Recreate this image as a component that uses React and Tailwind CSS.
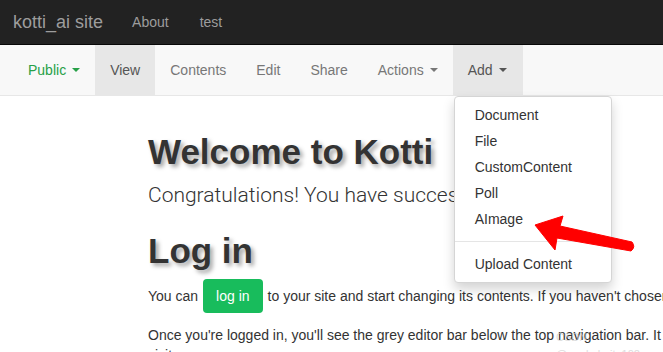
const Caret = () => (
  <span className="ml-[6px] inline-block h-0 w-0 border-x-4 border-t-4 border-x-transparent border-t-current align-middle" />
);

const tabs = [
  { label: "View", active: true },
  { label: "Contents" },
  { label: "Edit" },
  { label: "Share" },
  { label: "Actions", caret: true },
];

const addItems = ["Document", "File", "CustomContent", "Poll", "AImage"];

export default function App() {
  return (
    <div className="relative h-[352px] w-[663px] overflow-hidden bg-white font-['Liberation_Sans',Arial,sans-serif] text-[14px] text-[#333]">
      {/* top navbar */}
      <div className="flex h-[45px] items-center border-b border-[#080808] bg-[#222] text-[#9d9d9d]">
        <span className="pl-[13px] text-[18px]">kotti_ai site</span>
        <span className="pl-[29px]">About</span>
        <span className="pl-[31px]">test</span>
      </div>

      {/* editor bar */}
      <div className="flex h-[51px] border-b border-[#e7e7e7] bg-[#f8f8f8] pl-[13px] text-[#777]">
        <div className="flex items-center px-[15px] text-[#27a047]">
          Public
          <Caret />
        </div>
        {tabs.map((t) => (
          <div
            key={t.label}
            className={`flex items-center px-[15px] ${t.active ? "bg-[#e7e7e7] text-[#555]" : ""}`}
          >
            {t.label}
            {t.caret && <Caret />}
          </div>
        ))}
        <div className="relative flex items-center bg-[#e7e7e7] pl-[15px] pr-[16px] text-[#555]">
          Add
          <Caret />
          {/* dropdown */}
          <div className="absolute left-[1px] top-[51px] z-10 w-[158px] rounded-[4px] border border-[#d5d5d5] bg-white py-[5px] text-[#333] shadow-[0_6px_12px_rgba(0,0,0,0.175)]">
            {addItems.map((i) => (
              <div key={i} className="px-[20px] leading-[26px]">
                {i}
              </div>
            ))}
            <div className="my-[9px] h-px bg-[#e5e5e5]" />
            <div className="px-[20px] leading-[26px]">Upload Content</div>
          </div>
        </div>
      </div>

      {/* content */}
      <div className="pl-[148px] pt-[37px]">
        <h1 className="text-[35px] font-bold leading-[1.1] [text-shadow:3px_3px_4px_rgba(0,0,0,0.35)]">
          Welcome to Kotti
        </h1>
        <p className="mt-[9px] w-[440px] overflow-hidden whitespace-nowrap font-['Roboto',sans-serif] text-[21px] font-light leading-[1.4]">
          Congratulations! You have successfully installed Kotti.
        </p>
        <h2 className="mt-[22px] text-[35px] font-bold leading-[1.1] [text-shadow:3px_3px_4px_rgba(0,0,0,0.35)]">
          Log in
        </h2>
        <p className="mt-[9px] flex items-center whitespace-nowrap">
          You can
          <span className="mx-[5px] inline-block rounded-[4px] bg-[#18bc5c] px-[13px] py-[7px] leading-[20px] text-white">
            log in
          </span>
          to your site and start changing its contents. If you haven't chosen a password yet
        </p>
        <p className="mt-[12px] w-[915px] leading-[20px]">
          Once you're logged in, you'll see the grey editor bar below the top navigation bar. It will allow you to switch between editing and viewing as your
          visitors.
        </p>
      </div>

      {/* red arrow */}
      <svg className="pointer-events-none absolute left-0 top-0 z-20" width="663" height="352">
        <path
          d="M535 225 L563 216 L560 226 L632 242 Q636 247 631 251 L557 238 L555 250 Z"
          fill="#f00"
          stroke="#f00"
          strokeWidth="1"
          strokeLinejoin="round"
        />
      </svg>

      <span className="pointer-events-none absolute left-[556px] top-[329px] z-20 text-[11px] text-[#cfcfcf] opacity-70">
        CSDN @wyykuhaitu102
      </span>
    </div>
  );
}
